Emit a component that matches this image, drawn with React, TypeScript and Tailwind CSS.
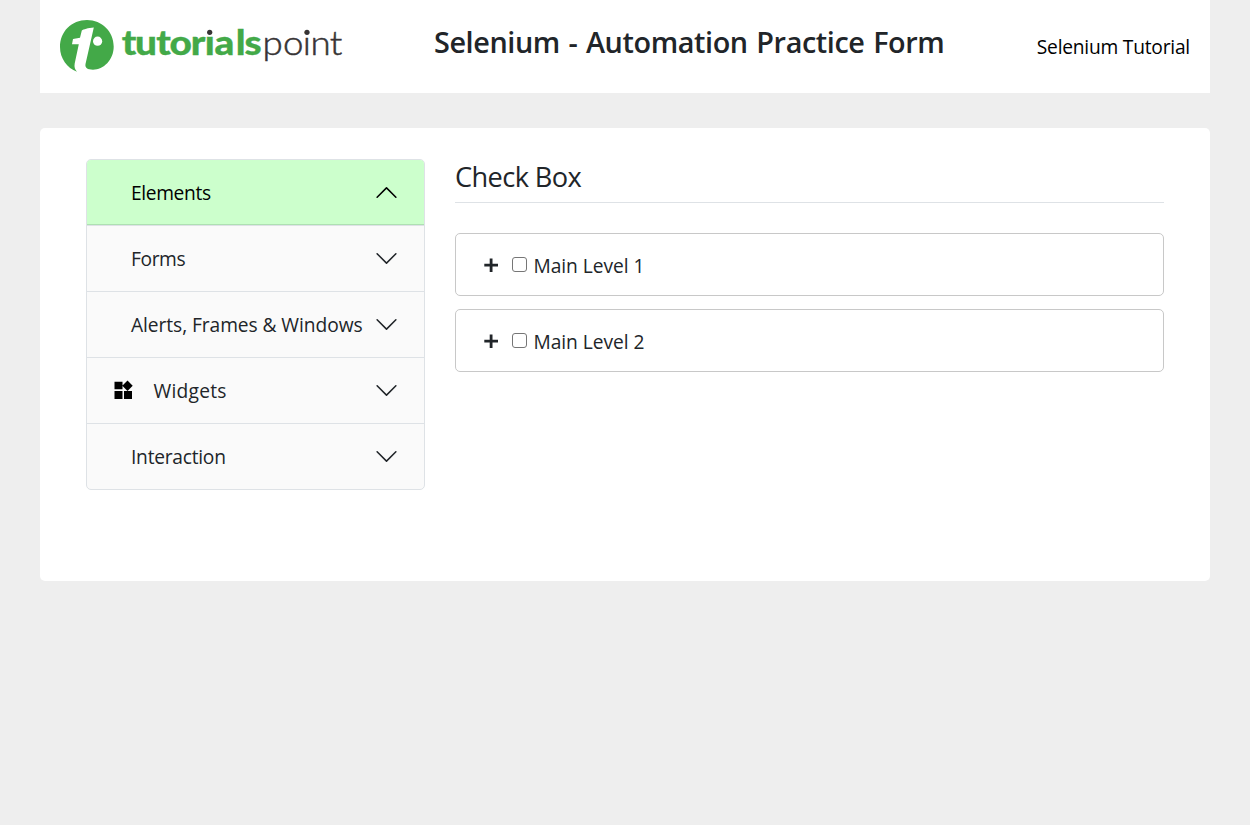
import { useState } from "react";

type Section = { label: string; open?: boolean; icon?: boolean; tracking: string };

const sections: Section[] = [
  { label: "Elements", open: true, tracking: "tracking-[-0.36px]" },
  { label: "Forms", tracking: "tracking-[-0.4px]" },
  { label: "Alerts, Frames & Windows", tracking: "tracking-[-0.07px]" },
  { label: "Widgets", icon: true, tracking: "tracking-[0.25px]" },
  { label: "Interaction", tracking: "tracking-[-0.25px]" },
];

function Logo() {
  return (
    <svg width="284" height="60" viewBox="0 0 284 60" className="block" aria-label="tutorialspoint">
      <path
        d="M17 56.800 C7 53 0 43.400 0 32 C0 16.600 11.500 5 27 5 C42 5 53.700 16.600 53.700 31.500 C53.700 45 43.500 54.700 33 54.700 C27.500 54.700 24.800 53 25.500 49 L33.800 12.500 C28 13 23.500 14.300 21.800 15.500 L20 22.800 L13 24 L12 29.200 L18.800 29.200 L14.700 48.500 C14 52 15 54.700 17 56.800 Z"
        fill="#43a948"
      />
      <circle cx="37.600" cy="26.200" r="4.600" fill="#fff" />
      <text
        transform="scale(1.14 1)"
        x="54.1 65.8 84.5 96 114.6 126.9 135.6 154.2 161.9"
        y="39.700"
        fontFamily="Lato, sans-serif"
        fontWeight="900"
        fontSize="34"
        fill="#43a948"
        stroke="#43a948"
        strokeWidth="0.3"
      >
        tutorials
      </text>
      <text
        transform="scale(1.08 1)"
        x="187.5 206.6 224.8 232 249.8"
        y="39.700"
        fontFamily="Lato, sans-serif"
        fontWeight="300"
        fontSize="34"
        fill="#373435"
        stroke="#373435"
        strokeWidth="0.5"
      >
        point
      </text>
      <circle cx="149.700" cy="16.800" r="4.400" fill="#fff" />
      <circle cx="149.700" cy="17.300" r="2.600" fill="#373435" />
      <circle cx="247" cy="17.300" r="2.600" fill="#373435" />
    </svg>
  );
}

function Chevron({ up }: { up?: boolean }) {
  return (
    <svg width="25" height="25" viewBox="0 0 16 16" className={up ? "shrink-0 rotate-180" : "shrink-0"} fill={up ? "#000000" : "#212529"}>
      <path
        fillRule="evenodd"
        d="M1.646 4.646a.5.5 0 0 1 .708 0L8 10.293l5.646-5.647a.5.5 0 0 1 .708.708l-6 6a.5.5 0 0 1-.708 0l-6-6a.5.5 0 0 1 0-.708z"
      />
    </svg>
  );
}

function WidgetsIcon() {
  return (
    <svg width="20" height="20" viewBox="0 0 20 20" className="mr-[20.5px] -mt-px shrink-0">
      <path d="M1.500 1.800h8v7.500h-8zM1.500 11h8v8h-8zM11 11h8v8h-8zM14.500 0.500l5.200 5.200-5.200 5.200-5.200-5.200z" />
    </svg>
  );
}

function TreeRow({ label }: { label: string }) {
  const [checked, setChecked] = useState(false);
  return (
    <li className="flex h-[63px] items-center rounded-[5px] border border-[#c8c8c8] pl-[28px]">
      <svg width="15" height="15" viewBox="0 0 15 15" className="mt-[2px] shrink-0">
        <path d="M5.700 0.500h2.800v5.300h5.500v2.700h-5.500v5.500h-2.800v-5.500h-5.400v-2.700h5.400z" fill="#212529" />
      </svg>
      <label className="ml-[13px] flex items-center">
        <input
          type="checkbox"
          checked={checked}
          onChange={() => setChecked(!checked)}
          className="size-[15px] shrink-0 appearance-none rounded-[3px] border border-[#767676] bg-white"
        />
        <span className="ml-[6.5px] pt-[2px] text-[19.2px] leading-[29px] tracking-[-0.05px]">{label}</span>
      </label>
    </li>
  );
}

export default function App() {
  return (
    <div className="min-h-screen bg-[#eeeeee] px-10 font-['Open_Sans','Noto_Sans',sans-serif] text-[#212529]">
      <header className="flex h-[93px] items-start bg-white px-[20px]">
        <div className="w-[374px] pt-[15px]">
          <Logo />
        </div>
        <h1 className="pt-[24px] text-[28.8px] leading-[35px] font-semibold tracking-[-0.4px] [word-spacing:1.5px] whitespace-nowrap">
          Selenium - Automation Practice Form
        </h1>
        <a className="ml-auto pt-[32px] text-[19.2px] leading-[29px] tracking-[-0.22px] whitespace-nowrap text-black">
          Selenium Tutorial
        </a>
      </header>

      <main className="mt-[35px] flex h-[453px] items-start gap-[30px] rounded-[5px] bg-white px-[46px] pt-[31px]">
        <nav className="w-[339px] shrink-0 overflow-hidden rounded-[5px] border border-[#dee2e6] bg-[#fafafa]">
          {sections.map((s, i) => (
            <div
              key={s.label}
              className={
                (s.open ? "bg-[#ccffcc] text-black shadow-[inset_0_-1px_0_#aee0b2] " : "") +
                (i < sections.length - 1 ? "h-[66px] border-b border-[#dee2e6] " : "h-[65px] ") +
                "flex items-center pr-[25px] text-[19.2px] " +
                (s.icon ? "pl-[26px]" : "pl-[44px]")
              }
            >
              {s.icon && <WidgetsIcon />}
              <span className={"min-w-0 flex-1 whitespace-nowrap pt-[2px] " + s.tracking}>{s.label}</span>
              <Chevron up={s.open} />
            </div>
          ))}
        </nav>

        <section className="min-w-0 flex-1">
          <h2 className="h-[44px] border-b border-[#dee2e6] text-[27.2px] leading-[35px] tracking-[-0.6px]">Check Box</h2>
          <ul className="mt-[30px] flex flex-col gap-[13px]">
            <TreeRow label="Main Level 1" />
            <TreeRow label="Main Level 2" />
          </ul>
        </section>
      </main>
    </div>
  );
}
